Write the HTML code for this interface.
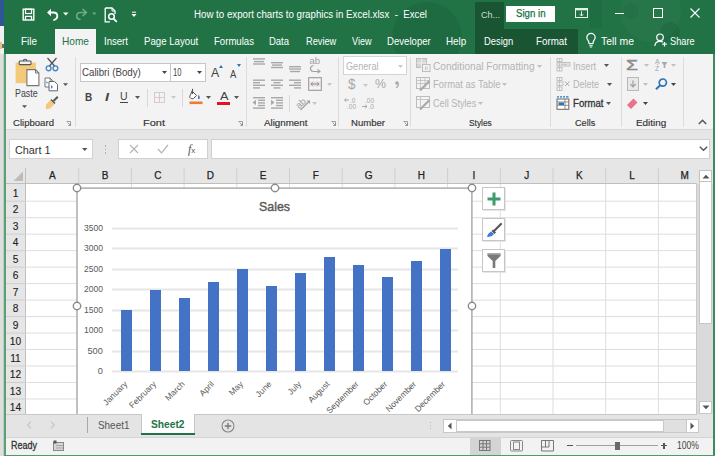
<!DOCTYPE html>
<html><head><meta charset="utf-8"><style>
html,body{margin:0;padding:0;}
body{width:715px;height:456px;overflow:hidden;position:relative;background:#fff;font-family:"Liberation Sans",sans-serif;}
.a{position:absolute;}
.t{white-space:nowrap;}
svg.a{overflow:visible;}
</style></head><body>
<div class="a" style="left:0px;top:0px;width:5px;height:456px;background:#e4e4e4;"></div>
<div class="a" style="left:0px;top:0px;width:5px;height:26px;background:#2f5597;"></div>
<div class="a" style="left:0px;top:26px;width:4px;height:28px;background:#f0f0f0;"></div>
<div class="a" style="left:0px;top:54px;width:4px;height:402px;background:#dedede;"></div>
<div class="a" style="left:0px;top:42px;width:2px;height:7px;background:#e6c27a;"></div>
<div class="a" style="left:2px;top:44px;width:2px;height:4px;background:#667080;"></div>
<div class="a" style="left:4px;top:0px;width:711px;height:54px;background:#217346;"></div>
<svg class="a" style="left:4px;top:0px;overflow:hidden;" width="711" height="54" viewBox="0 0 711 54"><circle cx="423" cy="37" r="35" fill="#000" fill-opacity="0.07"/><circle cx="647" cy="12" r="30" fill="#fff" fill-opacity="0.025"/><circle cx="627" cy="11" r="8" fill="#000" fill-opacity="0.04"/><circle cx="666" cy="32" r="10" fill="#000" fill-opacity="0.07"/><rect x="586" y="0" width="12" height="28" fill="#000" fill-opacity="0.04"/></svg>
<div class="a" style="left:475px;top:2px;width:29px;height:27px;background:#195433;"></div>
<div class="a" style="left:475px;top:29px;width:103px;height:25px;background:#195433;"></div>
<svg class="a" style="left:22px;top:8px;" width="13" height="13" viewBox="0 0 13 13"><rect x="1.2" y="1.2" width="10.6" height="10.8" fill="none" stroke="#fff" stroke-width="1.4"/><rect x="3.5" y="1.2" width="6" height="4.3" fill="none" stroke="#fff" stroke-width="1.2"/><path d="M3.5 12 V8.3 H9.5 V12" fill="none" stroke="#fff" stroke-width="1.3"/></svg>
<svg class="a" style="left:46px;top:8px;" width="13" height="13" viewBox="0 0 13 13"><path d="M1 4.5 L5 0.8 V8.2Z" fill="#fff"/><path d="M3 4.5 H7.5 Q11.3 4.5 11.3 8 Q11.3 11 8 12" fill="none" stroke="#fff" stroke-width="1.8" stroke-linecap="round"/></svg>
<svg class="a" style="left:63px;top:12px;" width="6" height="4" viewBox="0 0 6 4"><path d="M0 0.5 H5.5 L2.75 3.5Z" fill="#fff"/></svg>
<svg class="a" style="left:75px;top:8px;" width="13" height="12" viewBox="0 0 13 12"><path d="M11.5 4.5 L8 1.3 M11.5 4.5 L8 7.7 M11.2 4.5 H5.5 Q1.7 4.5 1.7 8 Q1.7 11 5 11.5" fill="none" stroke="#6fa985" stroke-width="1.6" stroke-linecap="round"/></svg>
<svg class="a" style="left:92px;top:12px;" width="5" height="4" viewBox="0 0 5 4"><path d="M0 0.5 H4.5 L2.25 3Z" fill="#6fa985"/></svg>
<svg class="a" style="left:104px;top:7px;" width="14" height="16" viewBox="0 0 14 16"><path d="M1.2 1 H8 L11 4 V7 M1.2 1 V14.8 H6" fill="none" stroke="#fff" stroke-width="1.3"/><circle cx="7.5" cy="9.5" r="2.8" fill="none" stroke="#fff" stroke-width="1.5"/><path d="M9.5 11.6 L12.8 14.8" stroke="#fff" stroke-width="1.8"/><path d="M8 1 V4 H11" fill="none" stroke="#fff" stroke-width="1"/></svg>
<svg class="a" style="left:131px;top:11px;" width="6" height="7" viewBox="0 0 6 7"><path d="M1 1.2 H5" stroke="#fff" stroke-width="1"/><path d="M0.5 3 H5.5 L3 6Z" fill="#fff"/></svg>
<svg class="a" style="left:575px;top:8px;" width="13" height="10" viewBox="0 0 13 10"><rect x="0.5" y="0.5" width="12" height="9" fill="none" stroke="#e8f0ea" stroke-width="1"/><rect x="0.5" y="0.5" width="12" height="1.8" fill="#e8f0ea"/><path d="M6.5 3.3 V8 M4.8 6.2 L6.5 8 L8.2 6.2" fill="none" stroke="#e8f0ea" stroke-width="1"/></svg>
<div class="a" style="left:615px;top:13px;width:9px;height:1px;background:#fff;"></div>
<svg class="a" style="left:653px;top:8px;" width="10" height="10" viewBox="0 0 10 10"><rect x="0.5" y="0.5" width="9" height="9" fill="none" stroke="#fff" stroke-width="1"/></svg>
<svg class="a" style="left:690px;top:8px;" width="10" height="10" viewBox="0 0 10 10"><path d="M0.5 0.5 L9.5 9.5 M9.5 0.5 L0.5 9.5" stroke="#fff" stroke-width="1.1"/></svg>
<svg class="a" style="left:586px;top:33px;" width="10" height="15" viewBox="0 0 10 15"><path d="M3 10.5 Q3 8.5 2 7.3 Q0.8 5.8 0.8 4.6 A4.2 4.2 0 0 1 9.2 4.6 Q9.2 5.8 8 7.3 Q7 8.5 7 10.5 Z" fill="none" stroke="#fff" stroke-width="1.2"/><path d="M3.2 12.3 H6.8 M3.8 14 H6.2" stroke="#fff" stroke-width="1.1"/></svg>
<svg class="a" style="left:654px;top:33px;" width="14" height="14" viewBox="0 0 14 14"><circle cx="6" cy="4.3" r="3.3" fill="none" stroke="#fff" stroke-width="1.2"/><path d="M0.8 13 Q1.2 8.3 6 8.3 Q8 8.3 9 9" fill="none" stroke="#fff" stroke-width="1.2"/><path d="M10.5 9 V13.5 M8.3 11.2 H12.8" stroke="#fff" stroke-width="1.2"/></svg>
<div class="a" style="left:3px;top:54px;width:1px;height:402px;background:#b5d3bf;"></div>
<div class="a" style="left:4px;top:54px;width:2px;height:402px;background:#5f9f78;"></div>
<div class="a" style="left:713px;top:54px;width:2px;height:402px;background:#3f8a5c;"></div>
<div class="a" style="left:4px;top:455px;width:711px;height:1px;background:#4f9a6c;"></div>
<div class="a t" style="left:193.50px;top:7.50px;font-size:10px;line-height:14px;color:#fff;transform:scaleX(0.9705);transform-origin:0 50%;">How to export charts to graphics in Excel.xlsx&nbsp;&nbsp;-&nbsp;&nbsp;Excel</div>
<div class="a" style="left:506px;top:6px;width:49px;height:16px;background:#fff;"></div>
<div class="a t" style="left:515.50px;top:6.50px;font-size:10px;line-height:14px;color:#217346;transform:scaleX(0.9648);transform-origin:0 50%;-webkit-text-stroke:0.25px #217346;">Sign in</div>
<div class="a t" style="left:481.00px;top:8.20px;font-size:9.5px;line-height:13px;color:#c9dfd0;transform:scaleX(0.9471);transform-origin:0 50%;">Ch...</div>
<div class="a" style="left:55px;top:29px;width:41px;height:25px;background:#f3f3f3;"></div>
<div class="a t" style="left:21.00px;top:34.60px;font-size:10.2px;line-height:14px;color:#fff;transform:scaleX(0.9735);transform-origin:0 50%;">File</div>
<div class="a t" style="left:62.00px;top:34.60px;font-size:10.2px;line-height:14px;color:#217346;transform:scaleX(0.9924);transform-origin:0 50%;">Home</div>
<div class="a t" style="left:104.00px;top:34.60px;font-size:10.2px;line-height:14px;color:#fff;transform:scaleX(0.9409);transform-origin:0 50%;">Insert</div>
<div class="a t" style="left:143.70px;top:34.60px;font-size:10.2px;line-height:14px;color:#fff;transform:scaleX(0.9480);transform-origin:0 50%;">Page Layout</div>
<div class="a t" style="left:213.70px;top:34.60px;font-size:10.2px;line-height:14px;color:#fff;transform:scaleX(0.9411);transform-origin:0 50%;">Formulas</div>
<div class="a t" style="left:269.30px;top:34.60px;font-size:10.2px;line-height:14px;color:#fff;transform:scaleX(0.9283);transform-origin:0 50%;">Data</div>
<div class="a t" style="left:305.70px;top:34.60px;font-size:10.2px;line-height:14px;color:#fff;transform:scaleX(0.9060);transform-origin:0 50%;">Review</div>
<div class="a t" style="left:351.50px;top:34.60px;font-size:10.2px;line-height:14px;color:#fff;transform:scaleX(0.8895);transform-origin:0 50%;">View</div>
<div class="a t" style="left:387.20px;top:34.60px;font-size:10.2px;line-height:14px;color:#fff;transform:scaleX(0.9421);transform-origin:0 50%;">Developer</div>
<div class="a t" style="left:446.00px;top:34.60px;font-size:10.2px;line-height:14px;color:#fff;transform:scaleX(0.9677);transform-origin:0 50%;">Help</div>
<div class="a t" style="left:484.30px;top:34.60px;font-size:10.2px;line-height:14px;color:#fff;transform:scaleX(0.9229);transform-origin:0 50%;">Design</div>
<div class="a t" style="left:536.00px;top:34.60px;font-size:10.2px;line-height:14px;color:#fff;transform:scaleX(0.9597);transform-origin:0 50%;">Format</div>
<div class="a t" style="left:601.00px;top:34.60px;font-size:10.2px;line-height:14px;color:#fff;transform:scaleX(1.0215);transform-origin:0 50%;">Tell me</div>
<div class="a t" style="left:670.00px;top:34.60px;font-size:10.2px;line-height:14px;color:#fff;transform:scaleX(0.9039);transform-origin:0 50%;">Share</div>
<div class="a" style="left:6px;top:54px;width:707px;height:75px;background:#f3f3f3;"></div>
<div class="a" style="left:6px;top:129px;width:707px;height:1px;background:#d8d8d8;"></div>
<div class="a" style="left:75px;top:57px;width:1px;height:70px;background:#dcdcdc;"></div>
<div class="a" style="left:246px;top:57px;width:1px;height:70px;background:#dcdcdc;"></div>
<div class="a" style="left:338px;top:57px;width:1px;height:70px;background:#dcdcdc;"></div>
<div class="a" style="left:410px;top:57px;width:1px;height:70px;background:#dcdcdc;"></div>
<div class="a" style="left:550px;top:57px;width:1px;height:70px;background:#dcdcdc;"></div>
<div class="a" style="left:621px;top:57px;width:1px;height:70px;background:#dcdcdc;"></div>
<div class="a" style="left:683px;top:57px;width:1px;height:70px;background:#dcdcdc;"></div>
<div class="a t" style="left:13.00px;top:117.00px;font-size:9.2px;line-height:13px;color:#333;transform:scaleX(1.0412);transform-origin:0 50%;-webkit-text-stroke:0.15px #333;">Clipboard</div>
<div class="a t" style="left:143.00px;top:117.00px;font-size:9.2px;line-height:13px;color:#333;transform:scaleX(1.1952);transform-origin:0 50%;-webkit-text-stroke:0.15px #333;">Font</div>
<div class="a t" style="left:263.70px;top:117.00px;font-size:9.2px;line-height:13px;color:#333;transform:scaleX(1.0634);transform-origin:0 50%;-webkit-text-stroke:0.15px #333;">Alignment</div>
<div class="a t" style="left:351.00px;top:117.00px;font-size:9.2px;line-height:13px;color:#333;transform:scaleX(1.0392);transform-origin:0 50%;-webkit-text-stroke:0.15px #333;">Number</div>
<div class="a t" style="left:469.40px;top:117.00px;font-size:9.2px;line-height:13px;color:#333;transform:scaleX(0.9101);transform-origin:0 50%;-webkit-text-stroke:0.15px #333;">Styles</div>
<div class="a t" style="left:574.70px;top:117.00px;font-size:9.2px;line-height:13px;color:#333;transform:scaleX(0.9927);transform-origin:0 50%;-webkit-text-stroke:0.15px #333;">Cells</div>
<div class="a t" style="left:636.00px;top:117.00px;font-size:9.2px;line-height:13px;color:#333;transform:scaleX(1.0772);transform-origin:0 50%;-webkit-text-stroke:0.15px #333;">Editing</div>
<svg class="a" style="left:15px;top:59px;" width="25" height="28" viewBox="0 0 25 28"><rect x="0.6" y="3.6" width="20.3" height="20.6" fill="#f3c97a"/><rect x="4.2" y="2" width="11.8" height="3.6" rx="0.8" fill="#f3f3f3" stroke="#555" stroke-width="1.1"/><path d="M8.3 2 Q8.3 0.3 10.1 0.3 Q11.9 0.3 11.9 2" fill="none" stroke="#555" stroke-width="1.1"/><path d="M11.9 10.6 H20.5 L23.9 14 V26.6 H11.9 Z" fill="#fff" stroke="#777" stroke-width="1.1"/><path d="M20.5 10.6 V14 H23.9" fill="none" stroke="#777" stroke-width="1"/></svg>
<div class="a t" style="left:14.60px;top:86.00px;font-size:11px;line-height:15px;color:#444;transform:scaleX(0.8035);transform-origin:0 50%;">Paste</div>
<svg class="a" style="left:22px;top:105px;" width="6" height="4" viewBox="0 0 6 4"><path d="M0 0.3 H5 L2.5 3Z" fill="#555"/></svg>
<svg class="a" style="left:45px;top:57px;" width="14" height="15" viewBox="0 0 14 15"><path d="M2.5 1 L10 9.5 M11.5 1 L4 9.5" stroke="#555" stroke-width="1.3"/><circle cx="3.6" cy="11.3" r="2.4" fill="none" stroke="#4a86c8" stroke-width="1.4"/><circle cx="10.4" cy="11.3" r="2.4" fill="none" stroke="#4a86c8" stroke-width="1.4"/></svg>
<svg class="a" style="left:44px;top:77px;" width="15" height="15" viewBox="0 0 15 15"><path d="M1 1 H6 L8.2 3.2 V10 H1 Z" fill="#fff" stroke="#777" stroke-width="1"/><path d="M6 1 V3.2 H8.2" fill="none" stroke="#777" stroke-width="0.8"/><path d="M5 4.5 H10.5 L13.5 7.5 V13.8 H5 Z" fill="#fff" stroke="#666" stroke-width="1"/><path d="M7 8 L9 10 L7 12Z M2.5 4 L4 5.5 L2.5 7Z" fill="#4a86c8"/></svg>
<svg class="a" style="left:63px;top:83px;" width="6" height="4" viewBox="0 0 6 4"><path d="M0 0.3 H5 L2.5 3Z" fill="#555"/></svg>
<svg class="a" style="left:45px;top:96px;" width="14" height="14" viewBox="0 0 14 14"><path d="M1 8.5 L5.5 4 L9.5 8 L5 12.5 Q2 13 0.8 13.2 Q1 11.5 1 8.5Z" fill="#f3c97a"/><path d="M5.5 4 L9.5 8 L10.5 7 L6.5 3Z" fill="#555"/><path d="M8.5 5 L12.8 0.8" stroke="#555" stroke-width="2"/></svg>
<svg class="a" style="left:66px;top:121px;" width="5" height="5" viewBox="0 0 5 5"><path d="M0.5 0.5 H4.5 V4.5" fill="none" stroke="#888" stroke-width="0.8"/><path d="M1.5 1.5 L4.3 4.3 M4.5 2.3 V4.5 H2.3" fill="none" stroke="#888" stroke-width="0.8"/></svg>
<div class="a" style="left:80px;top:63px;width:91px;height:19px;background:#fff;border:1px solid #c6c6c6;box-sizing:border-box;"></div>
<div class="a" style="left:170px;top:63px;width:36px;height:19px;background:#fff;border:1px solid #c6c6c6;box-sizing:border-box;"></div>
<div class="a t" style="left:82.00px;top:65.00px;font-size:11px;line-height:15px;color:#444;transform:scaleX(0.8825);transform-origin:0 50%;">Calibri (Body)</div>
<div class="a t" style="left:173.00px;top:65.00px;font-size:11px;line-height:15px;color:#444;transform:scaleX(0.6948);transform-origin:0 50%;">10</div>
<svg class="a" style="left:162px;top:71px;" width="5" height="3" viewBox="0 0 5 3"><path d="M0 0 H5 L2.5 3Z" fill="#444"/></svg>
<svg class="a" style="left:197px;top:71px;" width="5" height="3" viewBox="0 0 5 3"><path d="M0 0 H5 L2.5 3Z" fill="#444"/></svg>
<div class="a t" style="left:210.50px;top:64.00px;font-size:12.5px;line-height:18px;color:#444;transform:scaleX(0.9835);transform-origin:0 50%;">A</div>
<svg class="a" style="left:218.5px;top:65px;" width="4" height="3" viewBox="0 0 4 3"><path d="M0 3 H4 L2 0Z" fill="#2e75b6"/></svg>
<div class="a t" style="left:229.50px;top:66.50px;font-size:10.5px;line-height:15px;color:#444;transform:scaleX(0.8995);transform-origin:0 50%;">A</div>
<svg class="a" style="left:236.5px;top:64px;" width="4" height="3" viewBox="0 0 4 3"><path d="M0 0 H4 L2 3Z" fill="#2e75b6"/></svg>
<div class="a t" style="left:84.60px;top:89.80px;font-size:11px;line-height:15px;color:#444;font-weight:bold;transform:scaleX(0.9063);transform-origin:0 50%;">B</div>
<div class="a t" style="left:104.50px;top:89.30px;font-size:11.5px;line-height:16px;color:#444;transform:scaleX(1.2520);transform-origin:0 50%;font-style:italic;font-weight:bold;">I</div>
<div class="a t" style="left:120.00px;top:89.00px;font-size:10.5px;line-height:15px;color:#444;">U</div>
<div class="a" style="left:120px;top:102px;width:8px;height:1px;background:#444;"></div>
<svg class="a" style="left:135px;top:96px;" width="5" height="3" viewBox="0 0 5 3"><path d="M0 0 H5 L2.5 3Z" fill="#555"/></svg>
<div class="a" style="left:147px;top:89px;width:1px;height:18px;background:#d8d8d8;"></div>
<svg class="a" style="left:154px;top:92px;" width="11" height="11" viewBox="0 0 11 11"><rect x="0.5" y="0.5" width="10" height="10" fill="none" stroke="#d9c8d2" stroke-width="1"/><path d="M5.5 0.5 V10.5 M0.5 5.5 H10.5" stroke="#d9c8d2" stroke-width="1"/></svg>
<svg class="a" style="left:171px;top:96px;" width="5" height="3" viewBox="0 0 5 3"><path d="M0 0 H5 L2.5 3Z" fill="#c8c8c8"/></svg>
<div class="a" style="left:182px;top:89px;width:1px;height:18px;background:#d8d8d8;"></div>
<svg class="a" style="left:189px;top:88px;" width="14" height="17" viewBox="0 0 14 17"><path d="M3 3 L7.5 7.5 L4.5 10.5 Q3 11.5 1.5 10 L1 9.5 Q0 8 1.5 7 Z" fill="#fff" stroke="#555" stroke-width="1"/><path d="M3.5 0.8 V6" stroke="#555" stroke-width="1.1"/><path d="M9.5 6.5 Q11.5 9 10.5 11 Q9 11.5 9 10 Z" fill="#2e75b6"/><rect x="0.5" y="13.5" width="13" height="2.6" fill="#ed7d31"/></svg>
<svg class="a" style="left:206px;top:96px;" width="5" height="3" viewBox="0 0 5 3"><path d="M0 0 H5 L2.5 3Z" fill="#555"/></svg>
<div class="a t" style="left:219.50px;top:89.00px;font-size:11px;line-height:15px;color:#444;transform:scaleX(1.1585);transform-origin:0 50%;">A</div>
<div class="a" style="left:217px;top:102px;width:13px;height:3px;background:#e81123;"></div>
<svg class="a" style="left:234px;top:96px;" width="5" height="3" viewBox="0 0 5 3"><path d="M0 0 H5 L2.5 3Z" fill="#555"/></svg>
<svg class="a" style="left:238px;top:121px;" width="5" height="5" viewBox="0 0 5 5"><path d="M0.5 0.5 H4.5 V4.5" fill="none" stroke="#888" stroke-width="0.8"/><path d="M1.5 1.5 L4.3 4.3 M4.5 2.3 V4.5 H2.3" fill="none" stroke="#888" stroke-width="0.8"/></svg>
<svg class="a" style="left:252px;top:0px;" width="14" height="130" viewBox="0 0 14 130"><rect x="1" y="58.2" width="12" height="1.4" fill="#a8a8a8"/><rect x="2" y="60.9" width="10" height="1.4" fill="#a8a8a8"/><rect x="1" y="63.3" width="12" height="1.4" fill="#a8a8a8"/></svg>
<svg class="a" style="left:270px;top:0px;" width="14" height="130" viewBox="0 0 14 130"><rect x="1" y="62" width="12" height="1.4" fill="#a8a8a8"/><rect x="2" y="64.4" width="10" height="1.4" fill="#a8a8a8"/><rect x="1" y="66.8" width="12" height="1.4" fill="#a8a8a8"/></svg>
<svg class="a" style="left:288px;top:0px;" width="14" height="130" viewBox="0 0 14 130"><rect x="1" y="66" width="12" height="1.4" fill="#a8a8a8"/><rect x="1" y="68.3" width="12" height="1.4" fill="#a8a8a8"/><rect x="2" y="70.8" width="10" height="1.4" fill="#a8a8a8"/></svg>
<svg class="a" style="left:252px;top:0px;" width="14" height="130" viewBox="0 0 14 130"><rect x="1" y="79.5" width="12" height="1.4" fill="#a8a8a8"/><rect x="1" y="82" width="7" height="1.4" fill="#a8a8a8"/><rect x="1" y="84.6" width="12" height="1.4" fill="#a8a8a8"/><rect x="1" y="87.2" width="7" height="1.4" fill="#a8a8a8"/></svg>
<svg class="a" style="left:270px;top:0px;" width="14" height="130" viewBox="0 0 14 130"><rect x="1" y="79.5" width="12" height="1.4" fill="#a8a8a8"/><rect x="3.5" y="82" width="7" height="1.4" fill="#a8a8a8"/><rect x="1" y="84.6" width="12" height="1.4" fill="#a8a8a8"/><rect x="3.5" y="87.2" width="7" height="1.4" fill="#a8a8a8"/></svg>
<svg class="a" style="left:288px;top:0px;" width="14" height="130" viewBox="0 0 14 130"><rect x="1" y="79.5" width="12" height="1.4" fill="#a8a8a8"/><rect x="6" y="82" width="7" height="1.4" fill="#a8a8a8"/><rect x="1" y="84.6" width="12" height="1.4" fill="#a8a8a8"/><rect x="6" y="87.2" width="7" height="1.4" fill="#a8a8a8"/></svg>
<svg class="a" style="left:252px;top:0px;" width="14" height="130" viewBox="0 0 14 130"><rect x="1" y="97" width="12" height="1.4" fill="#a8a8a8"/><rect x="6" y="99.6" width="7" height="1.4" fill="#a8a8a8"/><rect x="6" y="102.2" width="7" height="1.4" fill="#a8a8a8"/><rect x="6" y="104.8" width="7" height="1.4" fill="#a8a8a8"/><rect x="1" y="107.4" width="12" height="1.4" fill="#a8a8a8"/></svg>
<svg class="a" style="left:270px;top:0px;" width="14" height="130" viewBox="0 0 14 130"><rect x="1" y="97" width="12" height="1.4" fill="#a8a8a8"/><rect x="6" y="99.6" width="7" height="1.4" fill="#a8a8a8"/><rect x="6" y="102.2" width="7" height="1.4" fill="#a8a8a8"/><rect x="6" y="104.8" width="7" height="1.4" fill="#a8a8a8"/><rect x="1" y="107.4" width="12" height="1.4" fill="#a8a8a8"/></svg>
<svg class="a" style="left:252px;top:99px;" width="6" height="7" viewBox="0 0 6 7"><path d="M0.5 3.5 L4 0.8 V6.2Z" fill="#a8a8a8"/></svg>
<svg class="a" style="left:270px;top:99px;" width="6" height="7" viewBox="0 0 6 7"><path d="M4.5 3.5 L1 0.8 V6.2Z" fill="#a8a8a8"/></svg>
<svg class="a" style="left:309px;top:56px;" width="15" height="17" viewBox="0 0 15 17"><text x="0.5" y="7.5" font-size="9.5" font-family="Liberation Sans" fill="#a0a0a0">ab</text><path d="M4.5 9.5 Q1.5 10 1.5 12.5 Q1.5 15.5 5 15.5 H10" fill="none" stroke="#a0a0a0" stroke-width="1.2"/><path d="M8.5 13.3 L11 15.5 L8.5 17" fill="none" stroke="#a0a0a0" stroke-width="1.1"/></svg>
<svg class="a" style="left:308px;top:77px;" width="14" height="14" viewBox="0 0 14 14"><rect x="0.6" y="0.6" width="12.8" height="12.8" fill="#e6dfe3" stroke="#a8a0a4" stroke-width="1.1"/><rect x="1.8" y="1.8" width="3" height="2.6" fill="#fbf8fa"/><rect x="5.6" y="1.8" width="3" height="2.6" fill="#fbf8fa"/><rect x="9.3" y="1.8" width="3" height="2.6" fill="#fbf8fa"/><rect x="1.8" y="9.6" width="3" height="2.6" fill="#fbf8fa"/><rect x="5.6" y="9.6" width="3" height="2.6" fill="#fbf8fa"/><rect x="9.3" y="9.6" width="3" height="2.6" fill="#fbf8fa"/><path d="M3 7 H11 M3 7 L4.8 5.6 M3 7 L4.8 8.4 M11 7 L9.2 5.6 M11 7 L9.2 8.4" stroke="#8a8a8a" stroke-width="0.9" fill="none"/></svg>
<svg class="a" style="left:327px;top:83px;" width="5" height="3" viewBox="0 0 5 3"><path d="M0 0 H5 L2.5 3Z" fill="#c8c8c8"/></svg>
<div class="a" style="left:289px;top:95px;width:1px;height:17px;background:#d8d8d8;"></div>
<svg class="a" style="left:294px;top:95px;" width="17" height="16" viewBox="0 0 17 16"><text x="1" y="12" font-size="9.5" font-family="Liberation Sans" fill="#a0a0a0" transform="rotate(-45 6 8)">ab</text><path d="M6.5 15 L15.5 6 M13 6 L15.5 6 L15.5 8.5" fill="none" stroke="#a0a0a0" stroke-width="1.1"/></svg>
<svg class="a" style="left:312px;top:102px;" width="5" height="3" viewBox="0 0 5 3"><path d="M0 0 H5 L2.5 3Z" fill="#c8c8c8"/></svg>
<svg class="a" style="left:331px;top:121px;" width="5" height="5" viewBox="0 0 5 5"><path d="M0.5 0.5 H4.5 V4.5" fill="none" stroke="#888" stroke-width="0.8"/><path d="M1.5 1.5 L4.3 4.3 M4.5 2.3 V4.5 H2.3" fill="none" stroke="#888" stroke-width="0.8"/></svg>
<div class="a" style="left:343px;top:56px;width:64px;height:19px;background:#fff;border:1px solid #d4d4d4;box-sizing:border-box;"></div>
<div class="a t" style="left:345.50px;top:58.50px;font-size:10.5px;line-height:15px;color:#b4b4b4;transform:scaleX(0.8701);transform-origin:0 50%;">General</div>
<svg class="a" style="left:398px;top:65px;" width="5" height="3" viewBox="0 0 5 3"><path d="M0 0 H5 L2.5 3Z" fill="#c8c8c8"/></svg>
<div class="a t" style="left:348.00px;top:74.00px;font-size:14px;line-height:20px;color:#a8a8a8;transform:scaleX(0.9634);transform-origin:0 50%;">$</div>
<svg class="a" style="left:363px;top:84px;" width="5" height="3" viewBox="0 0 5 3"><path d="M0 0 H5 L2.5 3Z" fill="#c8c8c8"/></svg>
<div class="a t" style="left:374.50px;top:75.00px;font-size:13px;line-height:18px;color:#a8a8a8;transform:scaleX(0.9516);transform-origin:0 50%;">%</div>
<svg class="a" style="left:395px;top:81px;" width="4" height="7" viewBox="0 0 4 7"><circle cx="2" cy="2" r="1.8" fill="#a8a8a8"/><path d="M3.5 2.5 Q3.5 5.5 1 6.8" fill="none" stroke="#a8a8a8" stroke-width="1.2"/></svg>
<svg class="a" style="left:344px;top:96px;" width="15" height="14" viewBox="0 0 15 14"><text x="6" y="6.5" font-size="6.5" font-family="Liberation Sans" fill="#a8a8a8">.0</text><text x="3" y="13" font-size="6.5" font-family="Liberation Sans" fill="#a8a8a8">.00</text><path d="M0.5 4 H5 M0.5 4 L2.3 2.3 M0.5 4 L2.3 5.7" fill="none" stroke="#a0a0a0" stroke-width="0.9"/></svg>
<svg class="a" style="left:361px;top:96px;" width="16" height="14" viewBox="0 0 16 14"><text x="4" y="6.5" font-size="6.5" font-family="Liberation Sans" fill="#a8a8a8">.00</text><text x="7.5" y="13" font-size="6.5" font-family="Liberation Sans" fill="#a8a8a8">.0</text><path d="M1 10.5 H6 M6 10.5 L4.2 8.8 M6 10.5 L4.2 12.2" fill="none" stroke="#a0a0a0" stroke-width="0.9"/></svg>
<svg class="a" style="left:403px;top:121px;" width="5" height="5" viewBox="0 0 5 5"><path d="M0.5 0.5 H4.5 V4.5" fill="none" stroke="#888" stroke-width="0.8"/><path d="M1.5 1.5 L4.3 4.3 M4.5 2.3 V4.5 H2.3" fill="none" stroke="#888" stroke-width="0.8"/></svg>
<svg class="a" style="left:416px;top:58px;" width="15" height="14" viewBox="0 0 15 14"><rect x="0.5" y="0.5" width="10" height="9" fill="#d6d6d6" stroke="#bdbdbd" stroke-width="1"/><path d="M0.5 5 H10.5 M5.5 0.5 V10" stroke="#f3f3f3" stroke-width="0.8"/><rect x="6.5" y="6.5" width="7.5" height="7" fill="#f3f3f3" stroke="#bdbdbd" stroke-width="1"/><path d="M9.5 8.5 V12 M11 8.5 V12" stroke="#bdbdbd" stroke-width="0.8"/></svg>
<svg class="a" style="left:416px;top:77px;" width="15" height="14" viewBox="0 0 15 14"><rect x="0.5" y="0.5" width="13" height="11" fill="#f3f3f3" stroke="#bdbdbd" stroke-width="1"/><path d="M0.5 3.5 H13.5 M0.5 6.5 H13.5 M4.5 0.5 V11.5 M9 0.5 V11.5" stroke="#bdbdbd" stroke-width="0.8"/><path d="M4 13.5 L13.5 4" stroke="#a8a8a8" stroke-width="2.2"/></svg>
<svg class="a" style="left:416px;top:96px;" width="15" height="14" viewBox="0 0 15 14"><rect x="0.5" y="0.5" width="13" height="11" fill="#f3f3f3" stroke="#bdbdbd" stroke-width="1"/><path d="M0.5 3.5 H13.5 M4.5 0.5 V11.5" stroke="#bdbdbd" stroke-width="0.8"/><path d="M4 13.5 L13.5 4" stroke="#a8a8a8" stroke-width="2.2"/></svg>
<div class="a t" style="left:432.70px;top:58.80px;font-size:10.5px;line-height:15px;color:#b4b4b4;transform:scaleX(0.9609);transform-origin:0 50%;">Conditional Formatting</div>
<svg class="a" style="left:537px;top:65px;" width="5" height="3" viewBox="0 0 5 3"><path d="M0 0 H5 L2.5 3Z" fill="#c0c0c0"/></svg>
<div class="a t" style="left:432.70px;top:77.00px;font-size:10.5px;line-height:15px;color:#b4b4b4;transform:scaleX(0.8990);transform-origin:0 50%;">Format as Table</div>
<svg class="a" style="left:502px;top:83px;" width="5" height="3" viewBox="0 0 5 3"><path d="M0 0 H5 L2.5 3Z" fill="#c0c0c0"/></svg>
<div class="a t" style="left:432.70px;top:95.90px;font-size:10.5px;line-height:15px;color:#b4b4b4;transform:scaleX(0.8730);transform-origin:0 50%;">Cell Styles</div>
<svg class="a" style="left:478px;top:102px;" width="5" height="3" viewBox="0 0 5 3"><path d="M0 0 H5 L2.5 3Z" fill="#c0c0c0"/></svg>
<svg class="a" style="left:556px;top:58px;" width="15" height="14" viewBox="0 0 15 14"><rect x="1" y="0.5" width="5" height="3" fill="none" stroke="#bdbdbd" stroke-width="0.9"/><rect x="1" y="9.5" width="5" height="3.5" fill="none" stroke="#bdbdbd" stroke-width="0.9"/><rect x="1" y="4.5" width="13" height="3.5" fill="#e4e4e4" stroke="#bdbdbd" stroke-width="0.9"/><path d="M3.5 0.5 V13 M5 6.3 H11" stroke="#bdbdbd" stroke-width="0.8"/></svg>
<div class="a t" style="left:573.00px;top:58.60px;font-size:10.5px;line-height:15px;color:#b4b4b4;transform:scaleX(0.8759);transform-origin:0 50%;">Insert</div>
<svg class="a" style="left:604px;top:64px;" width="5" height="3" viewBox="0 0 5 3"><path d="M0 0 H5 L2.5 3Z" fill="#555"/></svg>
<svg class="a" style="left:556px;top:77px;" width="15" height="15" viewBox="0 0 15 15"><rect x="1" y="0.5" width="5" height="3" fill="none" stroke="#bdbdbd" stroke-width="0.9"/><rect x="1" y="10" width="5" height="3.5" fill="none" stroke="#bdbdbd" stroke-width="0.9"/><rect x="1" y="5" width="6" height="3.5" fill="none" stroke="#bdbdbd" stroke-width="0.9"/><path d="M3.5 0.5 V13.5" stroke="#bdbdbd" stroke-width="0.8"/><path d="M9 4.5 L13.5 9 M13.5 4.5 L9 9" stroke="#a8a8a8" stroke-width="1"/></svg>
<div class="a t" style="left:573.00px;top:76.70px;font-size:10.5px;line-height:15px;color:#b4b4b4;transform:scaleX(0.8567);transform-origin:0 50%;">Delete</div>
<svg class="a" style="left:607px;top:83px;" width="5" height="3" viewBox="0 0 5 3"><path d="M0 0 H5 L2.5 3Z" fill="#555"/></svg>
<svg class="a" style="left:556px;top:96px;" width="14" height="14" viewBox="0 0 14 14"><path d="M1 0.8 H3 M4 0.8 H6 M7 0.8 H9 M10 0.8 H12.5" stroke="#2e75b6" stroke-width="1.2"/><rect x="1" y="3" width="11.8" height="10.3" fill="#fff" stroke="#666" stroke-width="1"/><path d="M1 6 H12.8 M1 9.3 H12.8 M9 3 V13.3" stroke="#777" stroke-width="0.8"/><rect x="2.5" y="6.5" width="5.5" height="2.5" fill="#2e75b6"/></svg>
<div class="a t" style="left:573.00px;top:96.10px;font-size:10.5px;line-height:15px;color:#333;transform:scaleX(0.9173);transform-origin:0 50%;-webkit-text-stroke:0.3px #333;">Format</div>
<svg class="a" style="left:606px;top:102px;" width="5" height="3" viewBox="0 0 5 3"><path d="M0 0 H5 L2.5 3Z" fill="#555"/></svg>
<svg class="a" style="left:572px;top:121px;" width="0" height="0" viewBox="0 0 0 0"></svg>
<div class="a t" style="left:626.00px;top:54.30px;font-size:15px;line-height:21px;color:#8c8c8c;transform:scaleX(1.2942);transform-origin:0 50%;-webkit-text-stroke:0.5px #8c8c8c;">Σ</div>
<svg class="a" style="left:644px;top:64px;" width="5" height="3" viewBox="0 0 5 3"><path d="M0 0 H5 L2.5 3Z" fill="#c0c0c0"/></svg>
<svg class="a" style="left:655px;top:57px;" width="14" height="15" viewBox="0 0 14 15"><text x="0" y="6.5" font-size="7" font-family="Liberation Sans" fill="#a8a8a8">A</text><text x="0" y="14" font-size="7" font-family="Liberation Sans" fill="#a8a8a8">Z</text><path d="M2.5 6.8 V8.2" stroke="#a8a8a8" stroke-width="0.8"/><path d="M6.5 5 H12.5 L10.3 8 V11 H8.7 V8 Z" fill="#a8a8a8"/></svg>
<svg class="a" style="left:671px;top:64px;" width="5" height="3" viewBox="0 0 5 3"><path d="M0 0 H5 L2.5 3Z" fill="#c0c0c0"/></svg>
<svg class="a" style="left:627px;top:77px;" width="12" height="14" viewBox="0 0 12 14"><rect x="0.5" y="0.5" width="11" height="13" fill="#e8e8e8" stroke="#b8b8b8" stroke-width="1"/><path d="M6 3.5 V9.5 M3.3 7 L6 9.8 L8.7 7" fill="none" stroke="#a0a0a0" stroke-width="1.2"/></svg>
<svg class="a" style="left:643px;top:83px;" width="5" height="3" viewBox="0 0 5 3"><path d="M0 0 H5 L2.5 3Z" fill="#c0c0c0"/></svg>
<svg class="a" style="left:655px;top:78px;" width="13" height="12" viewBox="0 0 13 12"><circle cx="7.8" cy="4.6" r="3.6" fill="none" stroke="#2e75b6" stroke-width="1.7"/><path d="M5.2 7.2 L1 11.3" stroke="#2e75b6" stroke-width="2"/></svg>
<svg class="a" style="left:671px;top:83px;" width="5" height="3" viewBox="0 0 5 3"><path d="M0 0 H5 L2.5 3Z" fill="#444"/></svg>
<svg class="a" style="left:626px;top:96px;" width="13" height="13" viewBox="0 0 13 13"><path d="M1 9 L7.5 2.5 L11.5 6.5 L5 13 Z" fill="#e8738a"/><path d="M1 9 L4 12" stroke="#f3a5b4" stroke-width="1"/></svg>
<svg class="a" style="left:643px;top:102px;" width="5" height="3" viewBox="0 0 5 3"><path d="M0 0 H5 L2.5 3Z" fill="#444"/></svg>
<svg class="a" style="left:698px;top:119px;" width="9" height="6" viewBox="0 0 9 6"><path d="M0.8 5 L4.5 1.3 L8.2 5" fill="none" stroke="#555" stroke-width="1.5"/></svg>
<div class="a" style="left:6px;top:130px;width:707px;height:38px;background:#e6e6e6;"></div>
<div class="a" style="left:9px;top:139px;width:84px;height:20px;background:#fff;border:1px solid #d2d2d2;box-sizing:border-box;"></div>
<div class="a t" style="left:14.80px;top:142.50px;font-size:11px;line-height:15px;color:#333;transform:scaleX(0.9842);transform-origin:0 50%;">Chart 1</div>
<div class="a" style="left:118px;top:139px;width:90px;height:20px;background:#fff;border:1px solid #d0d0d0;box-sizing:border-box;"></div>
<div class="a" style="left:211px;top:139px;width:499px;height:20px;background:#fff;border:1px solid #d0d0d0;box-sizing:border-box;"></div>
<svg class="a" style="left:82px;top:148px;" width="6" height="4" viewBox="0 0 6 4"><path d="M0 0 H5.5 L2.75 3Z" fill="#555"/></svg>
<div class="a" style="left:104.5px;top:145px;width:1.5px;height:1.5px;background:#b0b0b0;"></div>
<div class="a" style="left:104.5px;top:148.5px;width:1.5px;height:1.5px;background:#b0b0b0;"></div>
<div class="a" style="left:104.5px;top:152px;width:1.5px;height:1.5px;background:#b0b0b0;"></div>
<svg class="a" style="left:129px;top:144px;" width="10" height="10" viewBox="0 0 10 10"><path d="M1 1 L9 9 M9 1 L1 9" stroke="#b4b4b4" stroke-width="1.1"/></svg>
<svg class="a" style="left:157px;top:144px;" width="12" height="10" viewBox="0 0 12 10"><path d="M1 5 L4.5 8.8 L11 1" fill="none" stroke="#b4b4b4" stroke-width="1.2"/></svg>
<div class="a t" style="left:188px;top:142px;font-family:Liberation Serif;font-style:italic;font-size:12px;line-height:14px;color:#555;">f<span style="font-size:8px;font-style:normal;font-family:Liberation Sans">x</span></div>
<svg class="a" style="left:699px;top:146px;" width="9" height="5" viewBox="0 0 9 5"><path d="M0.8 0.8 L4.5 4.2 L8.2 0.8" fill="none" stroke="#555" stroke-width="1.4"/></svg>
<div class="a" style="left:6px;top:168px;width:691px;height:246px;background:#fff;"></div>
<div class="a" style="left:6px;top:168px;width:691px;height:15px;background:#e6e6e6;"></div>
<div class="a" style="left:6px;top:183px;width:691px;height:1px;background:#bfbfbf;"></div>
<div class="a" style="left:6px;top:184px;width:20px;height:230px;background:#e6e6e6;"></div>
<div class="a" style="left:25px;top:168px;width:1px;height:246px;background:#bfbfbf;"></div>
<svg class="a" style="left:13px;top:171px;" width="11" height="11" viewBox="0 0 11 11"><path d="M10 0.5 V10 H0.5Z" fill="#bcbcbc"/></svg>
<div class="a t" style="left:49.01px;top:169.00px;font-size:10px;line-height:14px;color:#222;-webkit-text-stroke:0.25px #222;">A</div>
<div class="a t" style="left:101.71px;top:169.00px;font-size:10px;line-height:14px;color:#222;-webkit-text-stroke:0.25px #222;">B</div>
<div class="a t" style="left:154.14px;top:169.00px;font-size:10px;line-height:14px;color:#222;-webkit-text-stroke:0.25px #222;">C</div>
<div class="a t" style="left:206.84px;top:169.00px;font-size:10px;line-height:14px;color:#222;-webkit-text-stroke:0.25px #222;">D</div>
<div class="a t" style="left:259.81px;top:169.00px;font-size:10px;line-height:14px;color:#222;-webkit-text-stroke:0.25px #222;">E</div>
<div class="a t" style="left:312.80px;top:169.00px;font-size:10px;line-height:14px;color:#222;-webkit-text-stroke:0.25px #222;">F</div>
<div class="a t" style="left:364.66px;top:169.00px;font-size:10px;line-height:14px;color:#222;-webkit-text-stroke:0.25px #222;">G</div>
<div class="a t" style="left:417.64px;top:169.00px;font-size:10px;line-height:14px;color:#222;-webkit-text-stroke:0.25px #222;">H</div>
<div class="a t" style="left:472.56px;top:169.00px;font-size:10px;line-height:14px;color:#222;-webkit-text-stroke:0.25px #222;">I</div>
<div class="a t" style="left:524.15px;top:169.00px;font-size:10px;line-height:14px;color:#222;-webkit-text-stroke:0.25px #222;">J</div>
<div class="a t" style="left:576.01px;top:169.00px;font-size:10px;line-height:14px;color:#222;-webkit-text-stroke:0.25px #222;">K</div>
<div class="a t" style="left:629.27px;top:169.00px;font-size:10px;line-height:14px;color:#222;-webkit-text-stroke:0.25px #222;">L</div>
<div class="a t" style="left:680.59px;top:169.00px;font-size:10px;line-height:14px;color:#222;-webkit-text-stroke:0.25px #222;">M</div>
<div class="a t" style="left:12.66px;top:186.96px;font-size:10.2px;line-height:14px;color:#222;-webkit-text-stroke:0.12px #222;">1</div>
<div class="a t" style="left:12.66px;top:203.44px;font-size:10.2px;line-height:14px;color:#222;-webkit-text-stroke:0.12px #222;">2</div>
<div class="a t" style="left:12.66px;top:219.92px;font-size:10.2px;line-height:14px;color:#222;-webkit-text-stroke:0.12px #222;">3</div>
<div class="a t" style="left:12.66px;top:236.40px;font-size:10.2px;line-height:14px;color:#222;-webkit-text-stroke:0.12px #222;">4</div>
<div class="a t" style="left:12.66px;top:252.88px;font-size:10.2px;line-height:14px;color:#222;-webkit-text-stroke:0.12px #222;">5</div>
<div class="a t" style="left:12.66px;top:269.36px;font-size:10.2px;line-height:14px;color:#222;-webkit-text-stroke:0.12px #222;">6</div>
<div class="a t" style="left:12.66px;top:285.84px;font-size:10.2px;line-height:14px;color:#222;-webkit-text-stroke:0.12px #222;">7</div>
<div class="a t" style="left:12.66px;top:302.32px;font-size:10.2px;line-height:14px;color:#222;-webkit-text-stroke:0.12px #222;">8</div>
<div class="a t" style="left:12.66px;top:318.80px;font-size:10.2px;line-height:14px;color:#222;-webkit-text-stroke:0.12px #222;">9</div>
<div class="a t" style="left:9.83px;top:335.28px;font-size:10.2px;line-height:14px;color:#222;-webkit-text-stroke:0.12px #222;">10</div>
<div class="a t" style="left:10.21px;top:351.76px;font-size:10.2px;line-height:14px;color:#222;-webkit-text-stroke:0.12px #222;">11</div>
<div class="a t" style="left:9.83px;top:368.24px;font-size:10.2px;line-height:14px;color:#222;-webkit-text-stroke:0.12px #222;">12</div>
<div class="a t" style="left:9.83px;top:384.72px;font-size:10.2px;line-height:14px;color:#222;-webkit-text-stroke:0.12px #222;">13</div>
<div class="a t" style="left:9.83px;top:401.20px;font-size:10.2px;line-height:14px;color:#222;-webkit-text-stroke:0.12px #222;">14</div>
<svg class="a" style="left:26px;top:184px;overflow:hidden;" width="671" height="230" viewBox="0 0 671 230"><rect x="52.20" y="0" width="1" height="230" fill="#dedede"/><rect x="104.90" y="0" width="1" height="230" fill="#dedede"/><rect x="157.60" y="0" width="1" height="230" fill="#dedede"/><rect x="210.30" y="0" width="1" height="230" fill="#dedede"/><rect x="263.00" y="0" width="1" height="230" fill="#dedede"/><rect x="315.70" y="0" width="1" height="230" fill="#dedede"/><rect x="368.40" y="0" width="1" height="230" fill="#dedede"/><rect x="421.10" y="0" width="1" height="230" fill="#dedede"/><rect x="473.80" y="0" width="1" height="230" fill="#dedede"/><rect x="526.50" y="0" width="1" height="230" fill="#dedede"/><rect x="579.20" y="0" width="1" height="230" fill="#dedede"/><rect x="631.90" y="0" width="1" height="230" fill="#dedede"/><rect x="684.60" y="0" width="1" height="230" fill="#dedede"/><rect x="0" y="16.70" width="671" height="1" fill="#dedede"/><rect x="0" y="33.18" width="671" height="1" fill="#dedede"/><rect x="0" y="49.66" width="671" height="1" fill="#dedede"/><rect x="0" y="66.14" width="671" height="1" fill="#dedede"/><rect x="0" y="82.62" width="671" height="1" fill="#dedede"/><rect x="0" y="99.10" width="671" height="1" fill="#dedede"/><rect x="0" y="115.58" width="671" height="1" fill="#dedede"/><rect x="0" y="132.06" width="671" height="1" fill="#dedede"/><rect x="0" y="148.54" width="671" height="1" fill="#dedede"/><rect x="0" y="165.02" width="671" height="1" fill="#dedede"/><rect x="0" y="181.50" width="671" height="1" fill="#dedede"/><rect x="0" y="197.98" width="671" height="1" fill="#dedede"/><rect x="0" y="214.46" width="671" height="1" fill="#dedede"/><rect x="0" y="230.94" width="671" height="1" fill="#dedede"/></svg>
<svg class="a" style="left:6px;top:168px;overflow:hidden;" width="691" height="15" viewBox="0 0 691 15"><rect x="72.20" y="0" width="1" height="15" fill="#cfcfcf"/><rect x="124.90" y="0" width="1" height="15" fill="#cfcfcf"/><rect x="177.60" y="0" width="1" height="15" fill="#cfcfcf"/><rect x="230.30" y="0" width="1" height="15" fill="#cfcfcf"/><rect x="283.00" y="0" width="1" height="15" fill="#cfcfcf"/><rect x="335.70" y="0" width="1" height="15" fill="#cfcfcf"/><rect x="388.40" y="0" width="1" height="15" fill="#cfcfcf"/><rect x="441.10" y="0" width="1" height="15" fill="#cfcfcf"/><rect x="493.80" y="0" width="1" height="15" fill="#cfcfcf"/><rect x="546.50" y="0" width="1" height="15" fill="#cfcfcf"/><rect x="599.20" y="0" width="1" height="15" fill="#cfcfcf"/><rect x="651.90" y="0" width="1" height="15" fill="#cfcfcf"/><rect x="704.60" y="0" width="1" height="15" fill="#cfcfcf"/></svg>
<svg class="a" style="left:6px;top:184px;overflow:hidden;" width="20" height="230" viewBox="0 0 20 230"><rect x="0" y="16.70" width="20" height="1" fill="#cfcfcf"/><rect x="0" y="33.18" width="20" height="1" fill="#cfcfcf"/><rect x="0" y="49.66" width="20" height="1" fill="#cfcfcf"/><rect x="0" y="66.14" width="20" height="1" fill="#cfcfcf"/><rect x="0" y="82.62" width="20" height="1" fill="#cfcfcf"/><rect x="0" y="99.10" width="20" height="1" fill="#cfcfcf"/><rect x="0" y="115.58" width="20" height="1" fill="#cfcfcf"/><rect x="0" y="132.06" width="20" height="1" fill="#cfcfcf"/><rect x="0" y="148.54" width="20" height="1" fill="#cfcfcf"/><rect x="0" y="165.02" width="20" height="1" fill="#cfcfcf"/><rect x="0" y="181.50" width="20" height="1" fill="#cfcfcf"/><rect x="0" y="197.98" width="20" height="1" fill="#cfcfcf"/><rect x="0" y="214.46" width="20" height="1" fill="#cfcfcf"/><rect x="0" y="230.94" width="20" height="1" fill="#cfcfcf"/></svg>
<div class="a" style="left:697px;top:168px;width:16px;height:246px;background:#e6e6e6;"></div>
<div class="a" style="left:697px;top:184px;width:16px;height:230px;background:#dadada;"></div>
<div class="a" style="left:696px;top:183px;width:1px;height:231px;background:#c8c8c8;"></div>
<div class="a" style="left:699px;top:181px;width:13px;height:143px;background:#fff;border:1px solid #c6c6c6;box-sizing:border-box;"></div>
<div class="a" style="left:77px;top:188px;width:395px;height:226px;background:#fff;"></div>
<svg class="a" style="left:70px;top:180px;overflow:hidden;" width="410" height="234" viewBox="0 0 410 234"><rect x="7" y="8.1" width="394.9" height="260" fill="none" stroke="#a6a6a6" stroke-width="1.4"/></svg>
<div class="a t" style="left:258.50px;top:197.50px;font-size:13px;line-height:18px;color:#595959;transform:scaleX(0.9533);transform-origin:0 50%;-webkit-text-stroke:0.4px #595959;">Sales</div>
<div class="a t" style="left:97.68px;top:365.10px;font-size:9.2px;line-height:13px;color:#595959;">0</div>
<div class="a t" style="left:87.45px;top:344.63px;font-size:9.2px;line-height:13px;color:#595959;">500</div>
<div class="a t" style="left:83.80px;top:324.16px;font-size:9.2px;line-height:13px;color:#595959;transform:scaleX(0.9284);transform-origin:0 50%;">1000</div>
<div class="a t" style="left:83.80px;top:303.69px;font-size:9.2px;line-height:13px;color:#595959;transform:scaleX(0.9284);transform-origin:0 50%;">1500</div>
<div class="a t" style="left:83.80px;top:283.21px;font-size:9.2px;line-height:13px;color:#595959;transform:scaleX(0.9284);transform-origin:0 50%;">2000</div>
<div class="a t" style="left:83.80px;top:262.74px;font-size:9.2px;line-height:13px;color:#595959;transform:scaleX(0.9284);transform-origin:0 50%;">2500</div>
<div class="a t" style="left:83.80px;top:242.27px;font-size:9.2px;line-height:13px;color:#595959;transform:scaleX(0.9284);transform-origin:0 50%;">3000</div>
<div class="a t" style="left:83.80px;top:221.80px;font-size:9.2px;line-height:13px;color:#595959;transform:scaleX(0.9284);transform-origin:0 50%;">3500</div>
<svg class="a" style="left:112px;top:184px;" width="346" height="230" viewBox="0 0 346 230"><rect x="0" y="186.50" width="346" height="2" fill="#e6e6e6"/><rect x="0" y="166.50" width="346" height="2" fill="#e6e6e6"/><rect x="0" y="145.50" width="346" height="2" fill="#e6e6e6"/><rect x="0" y="125.50" width="346" height="2" fill="#e6e6e6"/><rect x="0" y="104.50" width="346" height="2" fill="#e6e6e6"/><rect x="0" y="84.50" width="346" height="2" fill="#e6e6e6"/><rect x="0" y="63.50" width="346" height="2" fill="#e6e6e6"/><rect x="0" y="43.50" width="346" height="2" fill="#e6e6e6"/></svg>
<div class="a" style="left:121px;top:310px;width:11px;height:61px;background:#4472c4;"></div>
<div class="a t" style="left:91.65px;top:379.20px;font-size:8.5px;line-height:10px;color:#595959;transform:rotate(-45deg);transform-origin:100% 0;">January</div>
<div class="a" style="left:150px;top:290px;width:11px;height:81px;background:#4472c4;"></div>
<div class="a t" style="left:116.85px;top:379.20px;font-size:8.5px;line-height:10px;color:#595959;transform:rotate(-45deg);transform-origin:100% 0;">February</div>
<div class="a" style="left:179px;top:298px;width:11px;height:73px;background:#4472c4;"></div>
<div class="a t" style="left:156.21px;top:379.20px;font-size:8.5px;line-height:10px;color:#595959;transform:rotate(-45deg);transform-origin:100% 0;">March</div>
<div class="a" style="left:208px;top:282px;width:11px;height:89px;background:#4472c4;"></div>
<div class="a t" style="left:191.79px;top:379.20px;font-size:8.5px;line-height:10px;color:#595959;transform:rotate(-45deg);transform-origin:100% 0;">April</div>
<div class="a" style="left:237px;top:269px;width:11px;height:102px;background:#4472c4;"></div>
<div class="a t" style="left:221.71px;top:379.20px;font-size:8.5px;line-height:10px;color:#595959;transform:rotate(-45deg);transform-origin:100% 0;">May</div>
<div class="a" style="left:266px;top:286px;width:11px;height:85px;background:#4472c4;"></div>
<div class="a t" style="left:248.30px;top:379.20px;font-size:8.5px;line-height:10px;color:#595959;transform:rotate(-45deg);transform-origin:100% 0;">June</div>
<div class="a" style="left:295px;top:273px;width:11px;height:98px;background:#4472c4;"></div>
<div class="a t" style="left:280.59px;top:379.20px;font-size:8.5px;line-height:10px;color:#595959;transform:rotate(-45deg);transform-origin:100% 0;">July</div>
<div class="a" style="left:324px;top:257px;width:11px;height:114px;background:#4472c4;"></div>
<div class="a t" style="left:298.21px;top:379.20px;font-size:8.5px;line-height:10px;color:#595959;transform:rotate(-45deg);transform-origin:100% 0;">August</div>
<div class="a" style="left:353px;top:265px;width:11px;height:106px;background:#4472c4;"></div>
<div class="a t" style="left:312.07px;top:379.20px;font-size:8.5px;line-height:10px;color:#595959;transform:rotate(-45deg);transform-origin:100% 0;">September</div>
<div class="a" style="left:382px;top:277px;width:11px;height:94px;background:#4472c4;"></div>
<div class="a t" style="left:352.38px;top:379.20px;font-size:8.5px;line-height:10px;color:#595959;transform:rotate(-45deg);transform-origin:100% 0;">October</div>
<div class="a" style="left:411px;top:261px;width:11px;height:110px;background:#4472c4;"></div>
<div class="a t" style="left:372.38px;top:379.20px;font-size:8.5px;line-height:10px;color:#595959;transform:rotate(-45deg);transform-origin:100% 0;">November</div>
<div class="a" style="left:440px;top:249px;width:11px;height:122px;background:#4472c4;"></div>
<div class="a t" style="left:401.35px;top:379.20px;font-size:8.5px;line-height:10px;color:#595959;transform:rotate(-45deg);transform-origin:100% 0;">December</div>
<svg class="a" style="left:71px;top:182.1px;" width="12" height="12" viewBox="0 0 12 12"><circle cx="6" cy="6" r="3.7" fill="#fff" stroke="#8a8a8a" stroke-width="1.4"/></svg>
<svg class="a" style="left:268.5px;top:182.1px;" width="12" height="12" viewBox="0 0 12 12"><circle cx="6" cy="6" r="3.7" fill="#fff" stroke="#8a8a8a" stroke-width="1.4"/></svg>
<svg class="a" style="left:465.9px;top:182.1px;" width="12" height="12" viewBox="0 0 12 12"><circle cx="6" cy="6" r="3.7" fill="#fff" stroke="#8a8a8a" stroke-width="1.4"/></svg>
<svg class="a" style="left:71px;top:299.8px;" width="12" height="12" viewBox="0 0 12 12"><circle cx="6" cy="6" r="3.7" fill="#fff" stroke="#8a8a8a" stroke-width="1.4"/></svg>
<svg class="a" style="left:465.9px;top:299.8px;" width="12" height="12" viewBox="0 0 12 12"><circle cx="6" cy="6" r="3.7" fill="#fff" stroke="#8a8a8a" stroke-width="1.4"/></svg>
<div class="a" style="left:482px;top:187px;width:23px;height:23px;background:#fff;border:1px solid #c6c6c6;box-sizing:border-box;box-shadow:1px 1px 0 #e6e6e6;"></div>
<div class="a" style="left:482px;top:218px;width:23px;height:23px;background:#fff;border:1px solid #c6c6c6;box-sizing:border-box;box-shadow:1px 1px 0 #e6e6e6;"></div>
<div class="a" style="left:482px;top:249px;width:23px;height:23px;background:#fff;border:1px solid #c6c6c6;box-sizing:border-box;box-shadow:1px 1px 0 #e6e6e6;"></div>
<svg class="a" style="left:487px;top:192px;" width="14" height="14" viewBox="0 0 14 14"><path d="M5.5 0.5 H8.5 V5.5 H13.5 V8.5 H8.5 V13.5 H5.5 V8.5 H0.5 V5.5 H5.5Z" fill="#3f9b6e"/></svg>
<svg class="a" style="left:486px;top:222px;" width="16" height="16" viewBox="0 0 16 16"><path d="M1 15 Q2 11 5 9.5 L8 12 Q6 15 1 15Z" fill="#3b7dd8"/><path d="M5.5 9 L8.5 12 L10 10.5 L7 7.5Z" fill="#555"/><path d="M8.5 8.5 L15 2" stroke="#555" stroke-width="2.2" stroke-linecap="round"/></svg>
<svg class="a" style="left:487px;top:253px;" width="14" height="16" viewBox="0 0 14 16"><path d="M0.5 0.5 H13.5 V3 L8.3 8 V15 H5.7 V8 L0.5 3Z" fill="#7a7a7a"/><rect x="0.5" y="0.5" width="13" height="1.5" fill="#999"/></svg>
<div class="a" style="left:6px;top:414px;width:707px;height:23px;background:#e4e4e4;"></div>
<div class="a" style="left:6px;top:414px;width:691px;height:1px;background:#c8c8c8;"></div>
<div class="a" style="left:6px;top:437px;width:707px;height:1px;background:#d4d4d4;"></div>
<svg class="a" style="left:27px;top:421px;" width="5" height="8" viewBox="0 0 5 8"><path d="M4 0.5 L0.8 4 L4 7.5" fill="none" stroke="#c0c0c0" stroke-width="1.1"/></svg>
<svg class="a" style="left:50px;top:421px;" width="5" height="8" viewBox="0 0 5 8"><path d="M1 0.5 L4.2 4 L1 7.5" fill="none" stroke="#c0c0c0" stroke-width="1.1"/></svg>
<div class="a" style="left:87px;top:417px;width:1px;height:16px;background:#a8a8a8;"></div>
<div class="a t" style="left:98.00px;top:417.50px;font-size:11px;line-height:15px;color:#555;transform:scaleX(0.9007);transform-origin:0 50%;">Sheet1</div>
<div class="a" style="left:141px;top:414px;width:54px;height:21px;background:#fff;border-left:1px solid #c6c6c6;border-right:1px solid #c6c6c6;box-sizing:border-box;"></div>
<div class="a" style="left:141px;top:433px;width:54px;height:1.5px;background:#217346;"></div>
<div class="a t" style="left:150.50px;top:417.00px;font-size:10.5px;line-height:15px;color:#217346;font-weight:bold;transform:scaleX(0.9730);transform-origin:0 50%;">Sheet2</div>
<svg class="a" style="left:221px;top:419px;" width="14" height="14" viewBox="0 0 14 14"><circle cx="7" cy="7" r="6" fill="none" stroke="#8a8a8a" stroke-width="1.1"/><path d="M7 3.8 V10.2 M3.8 7 H10.2" stroke="#777" stroke-width="1.3"/></svg>
<div class="a" style="left:430.3px;top:422px;width:1.2px;height:1.2px;background:#b8b8b8;"></div>
<div class="a" style="left:430.3px;top:425px;width:1.2px;height:1.2px;background:#b8b8b8;"></div>
<div class="a" style="left:430.3px;top:428px;width:1.2px;height:1.2px;background:#b8b8b8;"></div>
<div class="a" style="left:443px;top:419px;width:256px;height:14px;background:#e0e0e0;border:1px solid #c8c8c8;box-sizing:border-box;"></div>
<div class="a" style="left:444px;top:420px;width:12px;height:12px;background:#fff;"></div>
<svg class="a" style="left:447px;top:422px;" width="5" height="8" viewBox="0 0 5 8"><path d="M4.5 0.5 L0.8 4 L4.5 7.5Z" fill="#555"/></svg>
<div class="a" style="left:456px;top:420px;width:208px;height:12px;background:#fff;border:1px solid #c8c8c8;box-sizing:border-box;"></div>
<div class="a" style="left:686px;top:420px;width:12px;height:12px;background:#fff;border-left:1px solid #c8c8c8;box-sizing:border-box;"></div>
<svg class="a" style="left:690px;top:422px;" width="5" height="8" viewBox="0 0 5 8"><path d="M0.5 0.5 L4.2 4 L0.5 7.5Z" fill="#555"/></svg>
<div class="a" style="left:699px;top:170px;width:13px;height:12px;background:#fff;border:1px solid #c2c2c2;box-sizing:border-box;"></div>
<svg class="a" style="left:701.5px;top:173.5px;" width="8" height="5" viewBox="0 0 8 5"><path d="M0.5 4.5 L4 0.8 L7.5 4.5Z" fill="#555"/></svg>
<div class="a" style="left:699px;top:401px;width:13px;height:13px;background:#fff;border:1px solid #c8c8c8;box-sizing:border-box;"></div>
<svg class="a" style="left:702px;top:405px;" width="8" height="5" viewBox="0 0 8 5"><path d="M0.5 0.5 L4 4.2 L7.5 0.5Z" fill="#555"/></svg>
<div class="a" style="left:6px;top:438px;width:707px;height:17px;background:#f2f2f2;"></div>
<div class="a t" style="left:10.90px;top:438.20px;font-size:10.5px;line-height:15px;color:#333;transform:scaleX(0.8567);transform-origin:0 50%;-webkit-text-stroke:0.3px #333;">Ready</div>
<svg class="a" style="left:53px;top:440px;" width="11" height="11" viewBox="0 0 11 11"><rect x="0.5" y="2.5" width="10" height="8" fill="#d6d6d6" stroke="#888" stroke-width="1"/><rect x="0.5" y="0.5" width="3" height="3" fill="#555"/><path d="M3 5.5 H10 M3 8 H10" stroke="#999" stroke-width="0.8"/></svg>
<div class="a" style="left:470px;top:438px;width:31px;height:17px;background:#d4d4d4;"></div>
<svg class="a" style="left:479px;top:440px;" width="12" height="11" viewBox="0 0 12 11"><rect x="0.5" y="0.5" width="10.5" height="10" fill="none" stroke="#777" stroke-width="1"/><path d="M4 0.5 V10.5 M7.5 0.5 V10.5 M0.5 3.8 H11 M0.5 7.2 H11" stroke="#777" stroke-width="1"/></svg>
<svg class="a" style="left:510px;top:440px;" width="13" height="12" viewBox="0 0 13 12"><rect x="0.5" y="0.5" width="12" height="10.5" rx="1" fill="none" stroke="#888" stroke-width="1"/><rect x="3.5" y="2" width="6" height="7.5" fill="none" stroke="#888" stroke-width="1"/></svg>
<svg class="a" style="left:541px;top:440px;" width="13" height="12" viewBox="0 0 13 12"><path d="M0.5 0.5 H12.5 V11 H0.5Z M0.5 7 H8 V0.5 M4.5 0.5 V7" fill="none" stroke="#777" stroke-width="1"/></svg>
<div class="a" style="left:567px;top:445px;width:6px;height:1.4px;background:#555;"></div>
<div class="a" style="left:576px;top:445px;width:82px;height:1px;background:#a0a0a0;"></div>
<div class="a" style="left:615px;top:442px;width:5px;height:8px;background:#6a6a6a;"></div>
<div class="a" style="left:661px;top:445px;width:6px;height:1.4px;background:#555;"></div>
<div class="a" style="left:663.3px;top:442.7px;width:1.4px;height:6px;background:#555;"></div>
<div class="a t" style="left:676.60px;top:438.00px;font-size:10.5px;line-height:15px;color:#444;transform:scaleX(0.8193);transform-origin:0 50%;">100%</div>
</body></html>
